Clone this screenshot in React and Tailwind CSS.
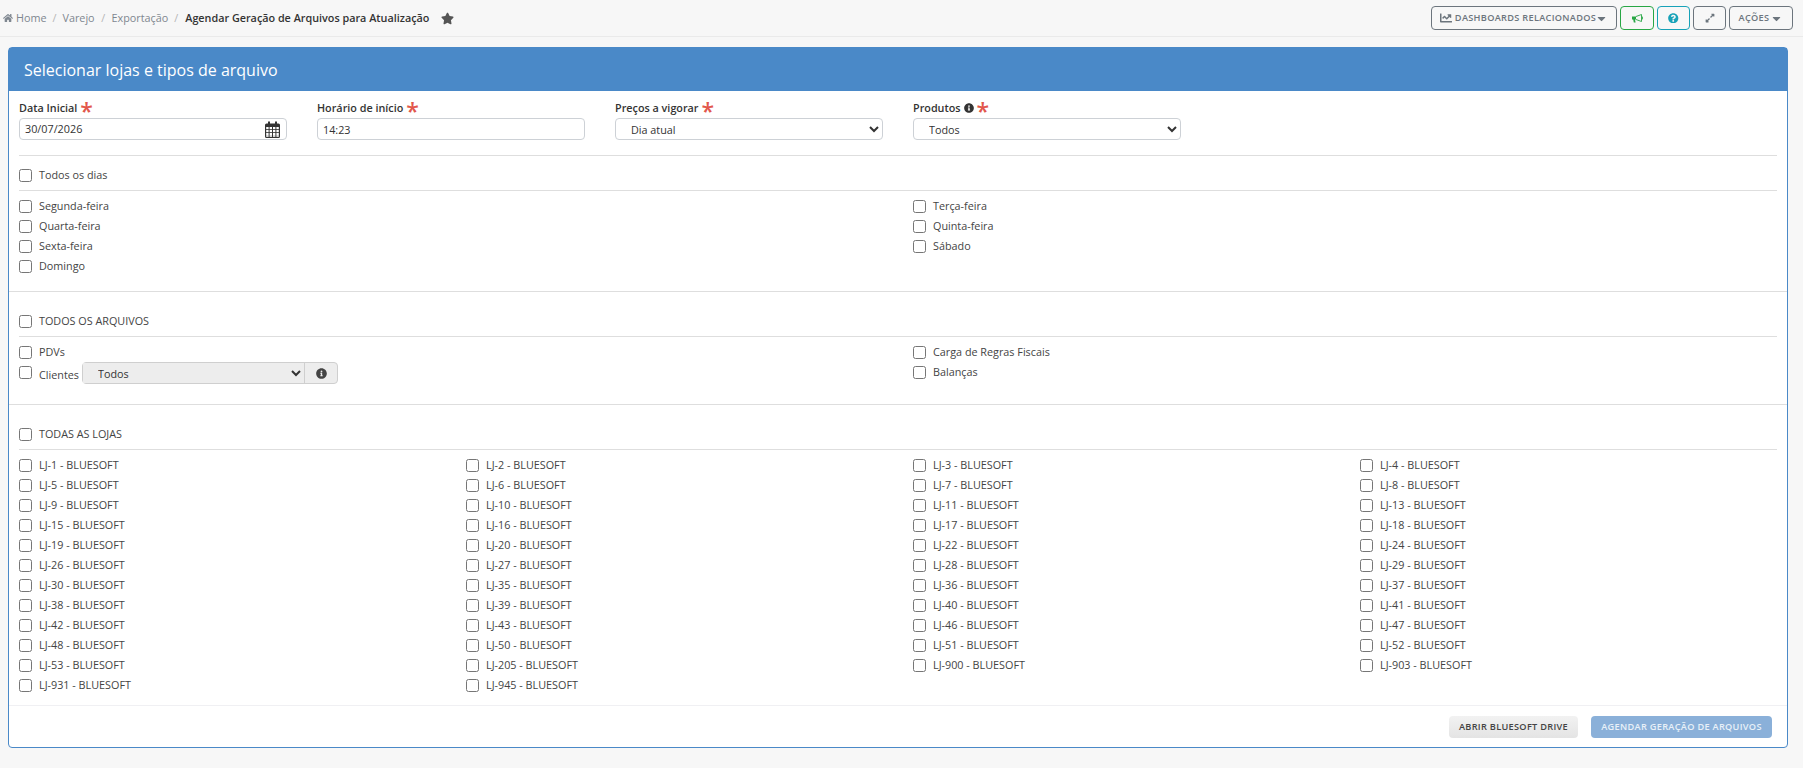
import React from "react";
import { FaHome, FaStar, FaChartLine, FaQuestionCircle, FaExpandAlt, FaInfoCircle, FaCaretDown } from "react-icons/fa";

const Cb = ({ className = "" }) => (
  <input type="checkbox" className={"w-[13px] h-[13px] shrink-0 " + className} />
);

const Check = ({ label, className = "" }) => (
  <label className={"flex items-center h-5 text-[10.8px] text-[#444] " + className}>
    <Cb />
    <span className="ml-[7px] whitespace-nowrap">{label}</span>
  </label>
);

const Field = ({ label, extra, children }) => (
  <div className="w-[268px]">
    <div className="flex items-center h-[19px] pb-[1px] text-[10.8px] font-semibold text-[#333]">
      {label}
      {extra}
      <span className="ml-[3px] h-[14px] text-[23px] font-semibold leading-[14px] text-[#e2574c] relative top-[3px]">*</span>
    </div>
    {children}
  </div>
);

const Select = ({ value, className = "" }) => (
  <select defaultValue={value} className={"block w-full h-[22px] pl-[11px] text-[10.8px] text-[#333] " + className}>
    <option>{value}</option>
  </select>
);

const CalendarIcon = () => (
  <svg viewBox="0 0 15 17" className="w-[15px] h-[17px] text-[#333]" fill="currentColor">
    <path d="M1.5 2.5H3V1.2a1 1 0 0 1 2 0v1.3h5V1.2a1 1 0 0 1 2 0v1.3h1.5A1.5 1.5 0 0 1 15 4v11.5a1.5 1.5 0 0 1-1.5 1.5h-12A1.5 1.5 0 0 1 0 15.5V4a1.5 1.5 0 0 1 1.5-1.5Z" />
    <g fill="#fff">
      {[1.2, 4.6, 8, 11.4].map((x) =>
        [6, 9, 12, 14.2].map((y) => (
          <rect key={x + "-" + y} x={x} y={y} width="2.4" height={y === 14.2 ? 1.6 : 2.2} />
        ))
      )}
    </g>
  </svg>
);

const BullhornIcon = () => (
  <svg viewBox="0 0 11 9" className="w-[11px] h-[9px]">
    <path d="M0 2.5H4V5.5H3L3.6 8.5H1.8L1.2 5.5H0Z" fill="currentColor" />
    <path d="M4 2.5L9.5 0.5V7.5L4 5.5M9.5 3H10.7V5H9.5" fill="none" stroke="currentColor" strokeWidth="0.9" />
  </svg>
);

const stores = [
  "1","2","3","4","5","6","7","8","9","10","11","13","15","16","17","18","19","20","22","24","26","27","28","29","30","35","36","37","38","39","40","41","42","43","46","47","48","50","51","52","53","205","900","903","931","945",
];

const TopBtn = ({ className = "", children }) => (
  <button className={"flex items-center justify-center h-6 border rounded-[4px] " + className}>{children}</button>
);

export default function App() {
  return (
    <div className="min-h-[768px] bg-[#f7f7f7] font-['Open_Sans',sans-serif]">
      <div className="flex items-center justify-between h-[37px] border-b border-[#eaeaea] pl-[3px] pr-[10px]">
        <div className="flex items-center text-[10.8px] text-[#7f8790]">
          <FaHome className="text-[10px] mr-[3px]" />
          <span>Home</span>
          <span className="mx-[6px] text-[#b5b5b5]">/</span>
          <span>Varejo</span>
          <span className="mx-[6.5px] text-[#b5b5b5]">/</span>
          <span>Exportação</span>
          <span className="mx-[6px] text-[#b5b5b5]">/</span>
          <span className="ml-[1px] font-semibold text-[#333]">Agendar Geração de Arquivos para Atualização</span>
          <FaStar className="ml-[12px] text-[13px] text-[#555]" />
        </div>
        <div className="flex items-center gap-[3px]">
          <TopBtn className="w-[186px] border-[#6c757d] text-[#6c757d] text-[9.2px] tracking-[0.3px] font-semibold">
            <FaChartLine className="text-[12px] mr-[3px]" />
            DASHBOARDS RELACIONADOS
            <FaCaretDown className="text-[13px] -ml-[1px]" />
          </TopBtn>
          <TopBtn className="w-[34px] border-[#28a745] text-[#28a745] text-[10px]"><BullhornIcon /></TopBtn>
          <TopBtn className="w-[33px] border-[#17a2b8] text-[#17a2b8] text-[10.5px]"><FaQuestionCircle /></TopBtn>
          <TopBtn className="w-[33px] border-[#6c757d] text-[#6c757d] text-[10px]"><FaExpandAlt /></TopBtn>
          <TopBtn className="w-[64px] border-[#6c757d] text-[#6c757d] text-[9.2px] tracking-[0.3px] font-semibold">
            AÇÕES
            <FaCaretDown className="text-[13px] ml-[1px]" />
          </TopBtn>
        </div>
      </div>

      <div className="mt-[10px] ml-2 w-[1780px] h-[701px] flex flex-col border border-[#4a89c8] rounded-[4px] bg-white">
        <div className="flex items-center h-[43px] bg-[#4a89c8] text-white text-[16px] pl-[15px] shrink-0">
          Selecionar lojas e tipos de arquivo
        </div>

        <div className="pt-[8px] px-[10px]">
          <div className="flex gap-[30px]">
            <Field label="Data Inicial">
              <div className="flex items-center justify-between h-[22px] border border-[#cdd1d6] rounded-[4px] bg-white pl-[5px] pr-[6px] text-[10.8px] text-[#333]">
                <span className="mt-[1px]">30/07/2026</span>
                <CalendarIcon />
              </div>
            </Field>
            <Field label="Horário de início">
              <input defaultValue="14:23" className="block w-full h-[22px] border border-[#cdd1d6] rounded-[4px] bg-white px-[5px] text-[10.8px] text-[#333]" />
            </Field>
            <Field label="Preços a vigorar">
              <Select value="Dia atual" className="border border-[#cdd1d6] rounded-[4px] bg-white" />
            </Field>
            <Field label="Produtos" extra={<FaInfoCircle className="ml-[3px] text-[10px] text-[#333]" />}>
              <Select value="Todos" className="border border-[#cdd1d6] rounded-[4px] bg-white" />
            </Field>
          </div>
          <div className="mt-[15px] border-t border-[#dedede]" />
          <Check label="Todos os dias" className="mt-[9px]" />
          <div className="mt-[5px] border-t border-[#dedede]" />
          <div className="mt-[5px] grid grid-cols-[894px_1fr]">
            {["Segunda-feira", "Terça-feira", "Quarta-feira", "Quinta-feira", "Sexta-feira", "Sábado", "Domingo"].map((d) => (
              <Check key={d} label={d} />
            ))}
          </div>
        </div>

        <div className="mt-[15px] border-t border-[#dedede]" />

        <div className="px-[10px]">
          <Check label="TODOS OS ARQUIVOS" className="mt-[19px]" />
          <div className="mt-[5px] border-t border-[#dedede]" />
          <div className="mt-[5px] grid grid-cols-[894px_1fr]">
            <Check label="PDVs" />
            <Check label="Carga de Regras Fiscais" />
            <div className="flex items-center h-[22px] text-[10.8px] text-[#444]">
              <Cb className="mb-[2px]" />
              <span className="ml-[7px] mt-[4px]">Clientes</span>
              <div className="ml-[3px] flex items-center h-[22px] w-[256px] border border-[#cfcfcf] rounded-[4px] bg-[#ededed] text-[#333]">
                <Select value="Todos" className="flex-1 min-w-0 h-full border-r border-[#cfcfcf] bg-[#ededed]" />
                <div className="w-[32px] shrink-0 flex items-center justify-center">
                  <FaInfoCircle className="text-[11px] text-[#444]" />
                </div>
              </div>
            </div>
            <Check label="Balanças" />
          </div>
        </div>

        <div className="mt-[20px] border-t border-[#dedede]" />

        <div className="px-[10px]">
          <Check label="TODAS AS LOJAS" className="mt-[19px]" />
          <div className="mt-[5px] border-t border-[#dedede]" />
          <div className="mt-[5px] grid grid-cols-[447px_447px_447px_1fr]">
            {stores.map((s) => (
              <Check key={s} label={`LJ-${s} - BLUESOFT`} />
            ))}
          </div>
        </div>

        <div className="mt-[10px] border-t border-[#f0f0f3]" />

        <div className="flex justify-end gap-[13px] mt-[10px] pr-[15px]">
          <button className="w-[129px] h-[22px] rounded-[4px] bg-gradient-to-b from-[#f2f2f2] to-[#e4e4e4] text-[9.2px] tracking-[0.3px] font-semibold text-[#444]">ABRIR BLUESOFT DRIVE</button>
          <button className="w-[181px] h-[22px] rounded-[4px] bg-[#8ab0d9] text-[9.2px] tracking-[0.3px] font-semibold text-[#e8f0f8]">AGENDAR GERAÇÃO DE ARQUIVOS</button>
        </div>
      </div>
    </div>
  );
}
